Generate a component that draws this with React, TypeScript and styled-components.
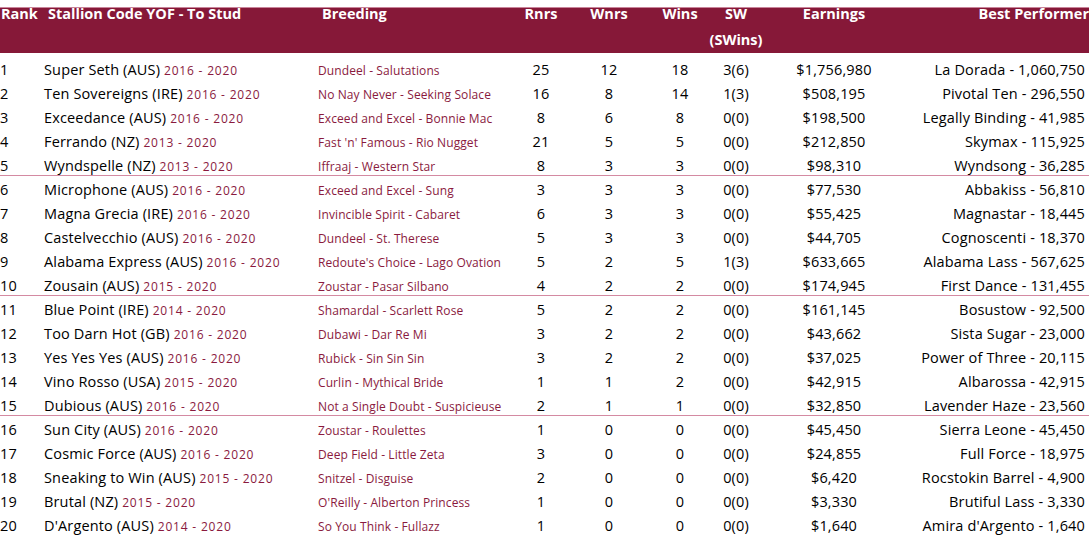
import styled, { createGlobalStyle } from "styled-components";

const GlobalStyle = createGlobalStyle`
  html, body {
    margin: 0;
    padding: 0;
    background: #ffffff;
  }
  body {
    font-family: "Open Sans", "Liberation Sans", sans-serif;
    color: #000000;
  }
`;

const COLS = "44px 274px 190px 66px 70px 72px 40px 156px 177px";

const Page = styled.div`
  width: 1089px;
  padding-top: 7px;
`;

const HeaderBand = styled.div`
  display: grid;
  grid-template-columns: ${COLS};
  height: 46px;
  background: #861838;
  border-top: 1px solid #c9849a;
  box-sizing: border-box;
  color: #ffffff;
  font-weight: 700;
  font-size: 14.5px;
`;

const HeadCell = styled.div<{ $align?: string; $pad?: number }>`
  display: flex;
  flex-direction: column;
  align-items: ${(p) => p.$align || "flex-start"};
  padding-left: ${(p) => p.$pad || 0}px;
  white-space: nowrap;
  margin-top: -1px;

  span {
    line-height: 14px;
  }
  span + span {
    margin-top: 12px;
  }
`;

const Body = styled.div`
  padding-top: 3px;
`;

const Row = styled.div<{ $sep?: boolean }>`
  display: grid;
  grid-template-columns: ${COLS};
  height: 24px;
  box-sizing: border-box;
  padding-top: 4px;
  line-height: 20px;
  font-size: 14.5px;
  letter-spacing: 0.15px;
  white-space: nowrap;
  border-bottom: 1px solid ${(p) => (p.$sep ? "#d48aa2" : "transparent")};
`;

const Cell = styled.div<{ $align?: string; $padRight?: number }>`
  text-align: ${(p) => p.$align || "left"};
  padding-right: ${(p) => p.$padRight || 0}px;
`;

const Year = styled.span`
  color: #8a1a3e;
  font-size: 12px;
  letter-spacing: 0.8px;
`;

const Breeding = styled.div`
  color: #8a1a3e;
  font-size: 12px;
  letter-spacing: 0.1px;
  padding-top: 1px;
`;

type Stallion = [string, string, string, number, number, number, string, string, string];

const data: Stallion[] = [
  ["Super Seth (AUS)", "2016 - 2020", "Dundeel - Salutations", 25, 12, 18, "3(6)", "$1,756,980", "La Dorada - 1,060,750"],
  ["Ten Sovereigns (IRE)", "2016 - 2020", "No Nay Never - Seeking Solace", 16, 8, 14, "1(3)", "$508,195", "Pivotal Ten - 296,550"],
  ["Exceedance (AUS)", "2016 - 2020", "Exceed and Excel - Bonnie Mac", 8, 6, 8, "0(0)", "$198,500", "Legally Binding - 41,985"],
  ["Ferrando (NZ)", "2013 - 2020", "Fast 'n' Famous - Rio Nugget", 21, 5, 5, "0(0)", "$212,850", "Skymax - 115,925"],
  ["Wyndspelle (NZ)", "2013 - 2020", "Iffraaj - Western Star", 8, 3, 3, "0(0)", "$98,310", "Wyndsong - 36,285"],
  ["Microphone (AUS)", "2016 - 2020", "Exceed and Excel - Sung", 3, 3, 3, "0(0)", "$77,530", "Abbakiss - 56,810"],
  ["Magna Grecia (IRE)", "2016 - 2020", "Invincible Spirit - Cabaret", 6, 3, 3, "0(0)", "$55,425", "Magnastar - 18,445"],
  ["Castelvecchio (AUS)", "2016 - 2020", "Dundeel - St. Therese", 5, 3, 3, "0(0)", "$44,705", "Cognoscenti - 18,370"],
  ["Alabama Express (AUS)", "2016 - 2020", "Redoute's Choice - Lago Ovation", 5, 2, 5, "1(3)", "$633,665", "Alabama Lass - 567,625"],
  ["Zousain (AUS)", "2015 - 2020", "Zoustar - Pasar Silbano", 4, 2, 2, "0(0)", "$174,945", "First Dance - 131,455"],
  ["Blue Point (IRE)", "2014 - 2020", "Shamardal - Scarlett Rose", 5, 2, 2, "0(0)", "$161,145", "Bosustow - 92,500"],
  ["Too Darn Hot (GB)", "2016 - 2020", "Dubawi - Dar Re Mi", 3, 2, 2, "0(0)", "$43,662", "Sista Sugar - 23,000"],
  ["Yes Yes Yes (AUS)", "2016 - 2020", "Rubick - Sin Sin Sin", 3, 2, 2, "0(0)", "$37,025", "Power of Three - 20,115"],
  ["Vino Rosso (USA)", "2015 - 2020", "Curlin - Mythical Bride", 1, 1, 2, "0(0)", "$42,915", "Albarossa - 42,915"],
  ["Dubious (AUS)", "2016 - 2020", "Not a Single Doubt - Suspicieuse", 2, 1, 1, "0(0)", "$32,850", "Lavender Haze - 23,560"],
  ["Sun City (AUS)", "2016 - 2020", "Zoustar - Roulettes", 1, 0, 0, "0(0)", "$45,450", "Sierra Leone - 45,450"],
  ["Cosmic Force (AUS)", "2016 - 2020", "Deep Field - Little Zeta", 3, 0, 0, "0(0)", "$24,855", "Full Force - 18,975"],
  ["Sneaking to Win (AUS)", "2015 - 2020", "Snitzel - Disguise", 2, 0, 0, "0(0)", "$6,420", "Rocstokin Barrel - 4,900"],
  ["Brutal (NZ)", "2015 - 2020", "O'Reilly - Alberton Princess", 1, 0, 0, "0(0)", "$3,330", "Brutiful Lass - 3,330"],
  ["D'Argento (AUS)", "2014 - 2020", "So You Think - Fullazz", 1, 0, 0, "0(0)", "$1,640", "Amira d'Argento - 1,640"],
];

export default function App() {
  return (
    <Page>
      <GlobalStyle />
      <HeaderBand>
        <HeadCell $pad={1}><span>Rank</span></HeadCell>
        <HeadCell $pad={4}><span>Stallion Code YOF - To Stud</span></HeadCell>
        <HeadCell $pad={4}><span>Breeding</span></HeadCell>
        <HeadCell $align="center"><span>Rnrs</span></HeadCell>
        <HeadCell $align="center"><span>Wnrs</span></HeadCell>
        <HeadCell $align="center"><span>Wins</span></HeadCell>
        <HeadCell $align="center">
          <span>SW</span>
          <span>(SWins)</span>
        </HeadCell>
        <HeadCell $align="center"><span>Earnings</span></HeadCell>
        <HeadCell $align="flex-end"><span>Best Performer</span></HeadCell>
      </HeaderBand>
      <Body>
        {data.map((r, i) => (
          <Row key={r[0]} $sep={i === 4 || i === 9 || i === 14}>
            <Cell>{i + 1}</Cell>
            <Cell>
              {r[0]} <Year>{r[1]}</Year>
            </Cell>
            <Breeding>{r[2]}</Breeding>
            <Cell $align="center">{r[3]}</Cell>
            <Cell $align="center">{r[4]}</Cell>
            <Cell $align="center">{r[5]}</Cell>
            <Cell $align="center">{r[6]}</Cell>
            <Cell $align="center">{r[7]}</Cell>
            <Cell $align="right" $padRight={4}>{r[8]}</Cell>
          </Row>
        ))}
      </Body>
    </Page>
  );
}
